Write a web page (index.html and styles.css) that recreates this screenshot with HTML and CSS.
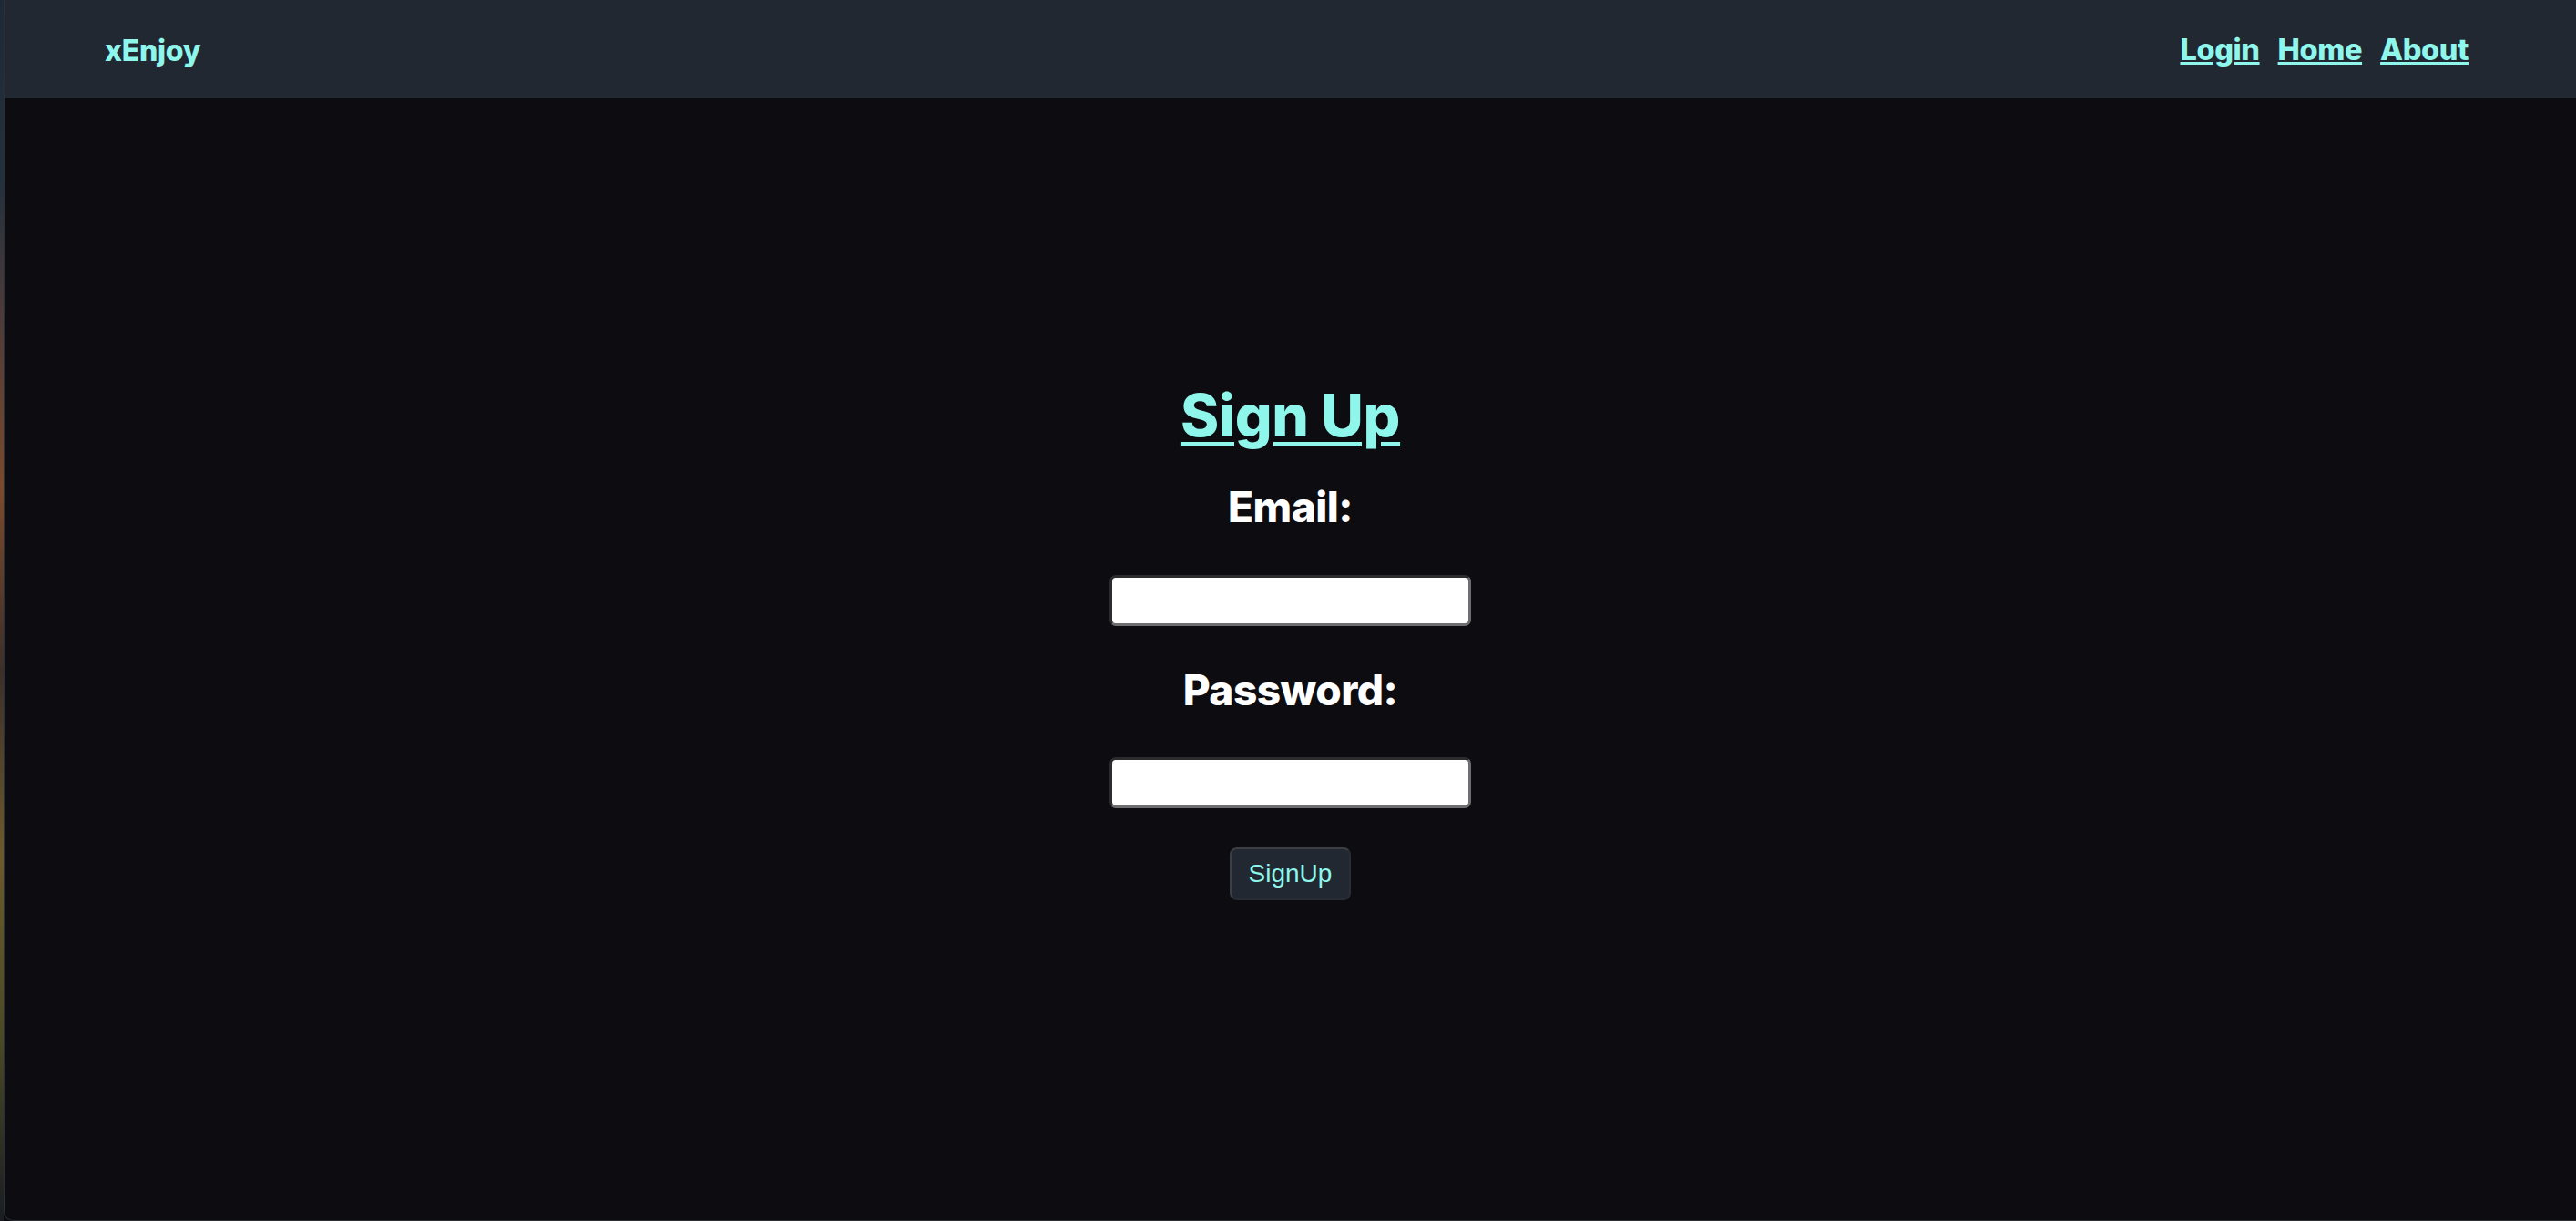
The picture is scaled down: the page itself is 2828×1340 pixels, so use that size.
FILE: index.html
```html
<!DOCTYPE html>
<html lang="en">
<head>
<meta charset="utf-8">
<title>xEnjoy - Sign Up</title>
<link rel="stylesheet" href="styles.css">
</head>
<body>
<div class="desktop"></div>
<div class="window">
  <header class="topbar">
    <a class="logo" href="#">xEnjoy</a>
    <nav class="nav">
      <a href="#">Login</a>
      <a href="#">Home</a>
      <a href="#">About</a>
    </nav>
  </header>
  <main class="main">
    <form class="signup">
      <h1 class="title">Sign Up</h1>
      <label class="label" for="email">Email:</label>
      <input class="field" id="email" type="email">
      <label class="label label-pw" for="pw">Password:</label>
      <input class="field" id="pw" type="password">
      <button class="btn" type="button">SignUp</button>
    </form>
  </main>
</div>
</body>
</html>
```
FILE: styles.css
```css
* { box-sizing: border-box; }
html, body { margin: 0; padding: 0; height: 100%; }
body {
  display: flex;
  background: #0b0c10;
  overflow: hidden;
}
.desktop {
  width: 4px;
  flex: 0 0 4px;
  background: linear-gradient(180deg, #1d2a36 0%, #23303d 15%, #4a3a3a 25%, #7a4a2c 40%, #3c2f2a 55%, #6b5a2c 70%, #4a4a26 85%, #1a1c22 100%);
}
.window {
  flex: 1;
  display: flex;
  flex-direction: column;
  background: #0c0c11;
  border-left: 1px solid #2c2f36;
  border-bottom: 1px solid #2c2f36;
  border-bottom-left-radius: 10px;
  overflow: hidden;
}
.topbar {
  height: 108px;
  flex: 0 0 108px;
  background: #222832;
  display: flex;
  align-items: center;
  justify-content: space-between;
  padding: 0 118px 0 110px;
  font-family: Inter, "Noto Sans", sans-serif;
  font-weight: 800;
}
.logo {
  color: #8ef6eb;
  text-decoration: none;
  font-size: 32px;
  letter-spacing: -0.3px;
  margin-top: 2px;
}
.nav {
  display: flex;
  gap: 20px;
}
.nav a {
  color: #8ef6eb;
  font-size: 32.5px;
  letter-spacing: -0.4px;
  text-decoration: underline;
  text-decoration-thickness: 3px;
  text-underline-offset: 2px;
}
.main {
  flex: 1;
  display: flex;
  justify-content: center;
}
.signup {
  display: flex;
  flex-direction: column;
  align-items: center;
  padding-top: 311px;
  font-family: Inter, "Noto Sans", sans-serif;
  font-weight: 800;
}
.title {
  margin: 0;
  color: #8ef6eb;
  font-size: 64px;
  line-height: 74px;
  font-weight: 800;
  letter-spacing: -0.3px;
  text-decoration: underline;
  text-decoration-thickness: 5px;
  text-underline-offset: 6px;
}
.label {
  color: #ffffff;
  font-size: 46px;
  line-height: 56px;
  letter-spacing: -0.5px;
  margin-top: 35px;
}
.label-pw { margin-top: 42px; }
.field {
  display: block;
  width: 397px;
  height: 56px;
  margin-top: 47px;
  background: #ffffff;
  border: 3px solid;
  border-color: #2c2c2e #6e6e70 #6e6e70 #2c2c2e;
  border-radius: 7px;
  outline: none;
}
.label-pw + .field { margin-top: 46px; }
.btn {
  margin-top: 43px;
  width: 133px;
  height: 58px;
  background: #222832;
  color: #8ef6eb;
  font-family: "Liberation Sans", Arial, sans-serif;
  font-size: 28px;
  border: 2px solid;
  border-color: #3c3f45 #2a2d33 #2a2d33 #3c3f45;
  border-radius: 8px;
  padding: 0;
}
```
